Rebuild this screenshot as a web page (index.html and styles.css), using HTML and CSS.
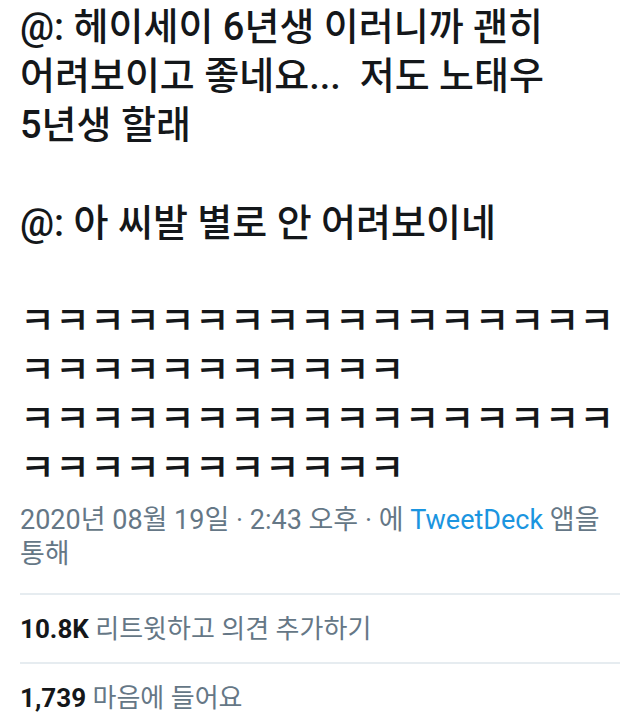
FILE: index.html
```html
<!DOCTYPE html>
<html lang="ko">
<head>
  <meta charset="UTF-8">
  <meta name="viewport" content="width=device-width, initial-scale=1.0">
  <title>트윗</title>
  <link rel="stylesheet" href="styles.css">
</head>
<body>
  <main class="tweet">
    <p class="tweet-text">@: 헤이세이 6년생 이러니까 괜히<br>어려보이고 좋네요...&nbsp; 저도 노태우<br>5년생 할래<br><br>@: 아 씨발 별로 안 어려보이네<br><br><span class="laugh">ㅋㅋㅋㅋㅋㅋㅋㅋㅋㅋㅋㅋㅋㅋㅋㅋㅋㅋㅋㅋㅋㅋㅋㅋㅋㅋㅋㅋ<br>ㅋㅋㅋㅋㅋㅋㅋㅋㅋㅋㅋㅋㅋㅋㅋㅋㅋㅋㅋㅋㅋㅋㅋㅋㅋㅋㅋㅋ</span></p>

    <div class="tweet-meta">
      2020년 08월 19일 · 2:43 오후 · 에 <a href="#" class="source">TweetDeck</a> 앱을 통해
    </div>

    <div class="tweet-stat"><strong>10.8K</strong> 리트윗하고 의견 추가하기</div>
    <div class="tweet-stat"><strong>1,739</strong> 마음에 들어요</div>
  </main>
</body>
</html>
```

FILE: styles.css
```css
:root {
  --text-color: #14171a;
  --muted-color: #657786;
  --link-color: #1b95e0;
  --border-color: #e6ecf0;
}

body {
  font-family: Roboto, "Noto Sans CJK KR", sans-serif;
  margin: 0;
  padding: 0;
  background-color: white;
  color: var(--text-color);
}

.tweet {
  padding: 3px 20px 0;
}

.tweet-text {
  margin: 0;
  font-size: 38px;
  font-weight: 500;
  line-height: 49px;
  word-break: keep-all;
}

.tweet-text .laugh {
  word-break: break-all;
}

.tweet-meta {
  margin-top: 10px;
  padding-bottom: 22px;
  font-size: 27px;
  line-height: 34px;
  color: var(--muted-color);
  word-break: keep-all;
}

.tweet-meta .source {
  color: var(--link-color);
  text-decoration: none;
}

.tweet-stat {
  border-top: 2px solid var(--border-color);
  padding: 17px 0 16px;
  font-size: 26px;
  line-height: 34px;
  color: var(--muted-color);
}

.tweet-stat strong {
  color: var(--text-color);
  font-weight: 700;
}
```
